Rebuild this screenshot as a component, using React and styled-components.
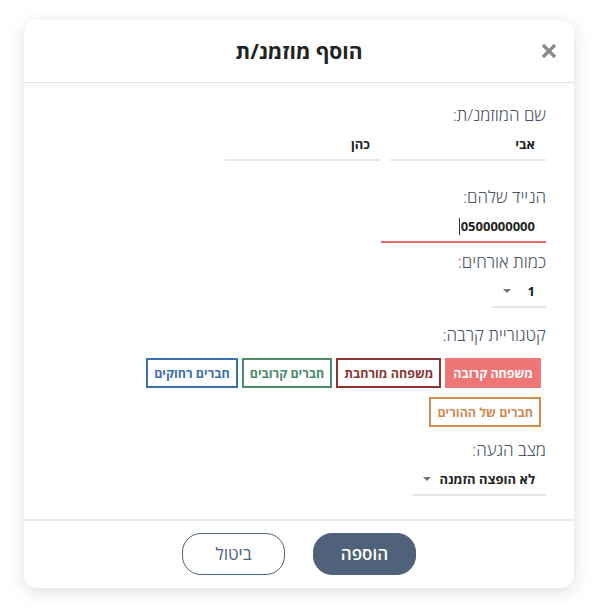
import React from 'react'
import styled, { createGlobalStyle } from 'styled-components'

const GlobalStyle = createGlobalStyle`
  html, body { margin: 0; padding: 0; background: #fff; }
  body { font-family: "Open Sans", "DejaVu Sans", sans-serif; }
`

const categories = [
  { label: 'משפחה קרובה', color: '#ef7676', filled: true },
  { label: 'משפחה מורחבת', color: '#8a3434' },
  { label: 'חברים קרובים', color: '#4b8a66' },
  { label: 'חברים רחוקים', color: '#3a70ae' },
  { label: 'חברים של ההורים', color: '#d38b4f' },
]

export default function App() {
  return (
    <>
      <GlobalStyle />
      <Page>
        <Card dir="rtl">
          <Header>
            <Title>הוסף מוזמנ/ת</Title>
            <Close aria-label="close">
              <svg width="16" height="16" viewBox="0 0 16 16">
                <path d="M2 2 L14 14 M14 2 L2 14" stroke="#8a8a8a" strokeWidth="3.2" />
              </svg>
            </Close>
          </Header>
          <Body>
            <Label $top={0}>שם המוזמנ/ת:</Label>
            <Row>
              <Field $w={156}><Value>אבי</Value></Field>
              <Field $w={156}><Value>כהן</Value></Field>
            </Row>

            <Label $top={24}>הנייד שלהם:</Label>
            <Field $w={165} $error>
              <Value dir="ltr"><Caret />0500000000</Value>
            </Field>

            <Label $top={7}>כמות אורחים:</Label>
            <Field $w={54}>
              <Value>1</Value>
              <Arrow />
            </Field>

            <Label $top={15}>קטגוריית קרבה:</Label>
            <Chips>
              {categories.map(c => (
                <Chip key={c.label} $color={c.color} $filled={c.filled}>{c.label}</Chip>
              ))}
            </Chips>

            <Label $top={11}>מצב הגעה:</Label>
            <Field $w={134}>
              <Value>לא הופצה הזמנה</Value>
              <Arrow />
            </Field>
          </Body>
          <Footer>
            <Button $primary>הוספה</Button>
            <Button>ביטול</Button>
          </Footer>
        </Card>
      </Page>
    </>
  )
}

const Page = styled.div`
  width: 600px;
  height: 609px;
  padding: 20px 26px 0 24px;
  box-sizing: border-box;
`

const Card = styled.div`
  width: 550px;
  height: 568px;
  background: #fff;
  border-radius: 13px;
  box-shadow: 0 4px 18px rgba(0, 0, 0, 0.13);
  display: flex;
  flex-direction: column;
  overflow: hidden;
`

const Header = styled.div`
  height: 62px;
  border-bottom: 1px solid #e4e4e4;
  display: flex;
  align-items: center;
  justify-content: center;
  position: relative;
`

const Title = styled.h2`
  margin: 0;
  font-size: 21px;
  font-weight: 700;
  color: #222;
`

const Close = styled.button`
  position: absolute;
  right: 17px;
  top: 23px;
  border: 0;
  background: none;
  padding: 0;
  display: flex;
`

const Body = styled.div`
  flex: 1;
  padding: 20px 28px 0 28px;
  display: flex;
  flex-direction: column;
  align-items: flex-start;
`

const Label = styled.div`
  margin-top: ${p => p.$top}px;
  height: 24px;
  line-height: 24px;
  font-size: 17px;
  font-weight: 300;
  color: #4a5466;
  margin-bottom: 2px;
`

const Row = styled.div`
  display: flex;
  gap: 9px;
`

const Field = styled.div`
  width: ${p => p.$w}px;
  height: 32px;
  box-sizing: border-box;
  border-bottom: 2px solid ${p => (p.$error ? '#e46a6a' : '#e6e6e6')};
  display: flex;
  align-items: center;
  justify-content: space-between;
  padding: 0 11px 0 11px;
  white-space: nowrap;
`

const Value = styled.span`
  font-size: 13px;
  font-weight: 700;
  color: #222;
  display: flex;
  align-items: center;
`

const Caret = styled.span`
  width: 1px;
  height: 17px;
  background: #333;
  margin-right: 1px;
`

const Arrow = styled.span`
  width: 0;
  height: 0;
  border-left: 4px solid transparent;
  border-right: 4px solid transparent;
  border-top: 4px solid #777;
`

const Chips = styled.div`
  margin-top: 9px;
  margin-right: 5px;
  width: 396px;
  display: flex;
  flex-wrap: wrap;
  gap: 9px 4px;
`

const Chip = styled.button`
  height: 30px;
  padding: 0 6px;
  border: 2px solid ${p => p.$color};
  background: ${p => (p.$filled ? p.$color : '#fff')};
  color: ${p => (p.$filled ? '#fff' : p.$color)};
  font-family: inherit;
  font-size: 12.5px;
  font-weight: 700;
  white-space: nowrap;
`

const Footer = styled.div`
  height: 69px;
  border-top: 2px solid #e8e8e8;
  box-sizing: border-box;
  display: flex;
  justify-content: center;
  align-items: center;
  gap: 28px;
  padding-bottom: 2px;
`

const Button = styled.button`
  width: 103px;
  height: 42px;
  border-radius: 19px;
  border: 1.5px solid #4f6279;
  background: ${p => (p.$primary ? '#4f6279' : '#fff')};
  color: ${p => (p.$primary ? '#fff' : '#4f6279')};
  font-family: inherit;
  font-size: 17px;
  font-weight: ${p => (p.$primary ? 600 : 400)};
`
